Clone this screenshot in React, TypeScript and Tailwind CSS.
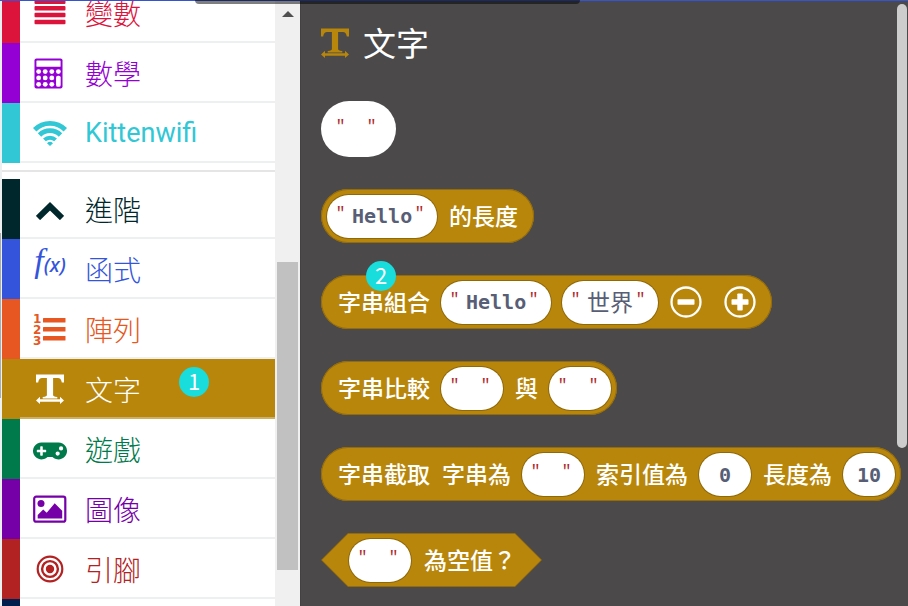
import type { ReactNode } from "react";
import { FaGamepad } from "react-icons/fa";

const sans = "font-['Roboto','Noto_Sans_CJK_TC',sans-serif]";

function MenuIcon() {
  return (
    <svg viewBox="0 0 32 32" className="size-8" fill="currentColor">
      <rect x="0.5" y="2.5" width="31" height="4.5" rx="1" />
      <rect x="0.5" y="8.9" width="31" height="4.5" rx="1" />
      <rect x="0.5" y="15.8" width="31" height="4.5" rx="1" />
      <rect x="0.5" y="22.7" width="31" height="4.5" rx="1" />
    </svg>
  );
}

function CalculatorIcon() {
  return (
    <svg viewBox="0 0 30 32" className="mr-1 h-[31px] w-[29px]">
      <rect x="0.5" y="0.5" width="29" height="31" rx="2" fill="currentColor" />
      <rect x="2.5" y="2.5" width="25" height="6.5" rx="0.6" fill="white" />
      {[14, 20.6, 27.2].map((y) =>
        [4.8, 11.6, 18.4].map((x) => <circle key={`${x}-${y}`} cx={x} cy={y} r="2.5" fill="white" />),
      )}
      <circle cx="25.2" cy="14" r="2.5" fill="white" />
      <rect x="22.8" y="18.2" width="4.8" height="11.6" rx="2" fill="white" />
    </svg>
  );
}

function WifiIcon() {
  return (
    <svg viewBox="0 0 34 25" className="h-[25px] w-[34px]" fill="none" stroke="currentColor" strokeWidth="4.8">
      <path d="M1.700 8.800a21.500 21.500 0 0 1 30.600 0" />
      <path d="M6.500 14a14.800 14.800 0 0 1 21 0" />
      <path d="M11.400 18.900a8.200 8.200 0 0 1 11.200 0" strokeWidth="4" />
      <path d="M14 22.200a4.400 4.400 0 0 1 6 0l-3 2.800z" fill="currentColor" stroke="none" />
    </svg>
  );
}

function ChevronIcon() {
  return (
    <svg viewBox="0 0 28 18" className="mt-1 h-[18px] w-7" fill="none" stroke="currentColor" strokeWidth="6">
      <path d="M2 16 14 4.300 26 16" />
    </svg>
  );
}

function FunctionIcon() {
  return (
    <span className="flex items-end pb-4 italic">
      <span className="font-['Liberation_Serif',serif] text-[34px] leading-8">f</span>
      <span className="font-['Noto_Sans',sans-serif] text-xl leading-6 font-medium">(x)</span>
    </span>
  );
}

function NumberedListIcon() {
  return (
    <svg viewBox="0 0 32 32" className="size-8 overflow-visible" fill="currentColor">
      <g className="font-['DejaVu_Sans',sans-serif] text-[12px] font-bold">
        <text x="-1" y="9.500">1</text>
        <text x="-1" y="20.500">2</text>
        <text x="-1" y="31.500">3</text>
      </g>
      <rect x="9" y="5" width="22.500" height="4.400" rx="0.500" />
      <rect x="9" y="14" width="22.500" height="4.400" rx="0.500" />
      <rect x="9" y="23" width="22.500" height="4.400" rx="0.500" />
    </svg>
  );
}

function TextIcon() {
  return (
    <svg viewBox="0 0 28 30" className="h-[30px] w-7" fill="currentColor">
      <path d="M0 0.500h28v8h-2.200c-.5-3.200-1.600-4.500-4.800-4.500h-3.900v17c0 1.200 1 1.600 4.200 2v1.500H6.700V23c3.200-.4 4.200-.8 4.200-2V4H7c-3.200 0-4.300 1.300-4.800 4.500H0z" />
      <path d="M0 26.500 4 22.800v2.500h20v-2.500l4 3.700-4 3.500v-2.300H4V30z" />
    </svg>
  );
}

function PictureIcon() {
  return (
    <svg viewBox="0 0 34 28" className="h-7 w-[34px]" fill="currentColor">
      <rect x="1.200" y="1.700" width="31.100" height="25" rx="2" fill="none" stroke="currentColor" strokeWidth="2.200" />
      <circle cx="8" cy="8.500" r="3.500" />
      <path d="M4.700 23.500v-3.500l5.500-5.500 3.500 3.300 8-9.500 7.500 7.500v7.700z" />
    </svg>
  );
}

function TargetIcon() {
  return (
    <svg viewBox="0 0 28 28" className="size-7" fill="none" stroke="currentColor">
      <circle cx="14" cy="14" r="12.300" strokeWidth="2.200" />
      <circle cx="14" cy="14" r="7.900" strokeWidth="2.400" />
      <circle cx="14" cy="14" r="4.200" fill="currentColor" stroke="none" />
    </svg>
  );
}

type Category = { label: string; icon: ReactNode; row: string; text: string };

const basic: Category[] = [
  { label: "變數", icon: <MenuIcon />, row: "border-[#dc143c]", text: "text-[#dc143c]" },
  { label: "數學", icon: <CalculatorIcon />, row: "border-[#9400d3]", text: "text-[#9400d3]" },
  { label: "Kittenwifi", icon: <WifiIcon />, row: "border-[#31c7d5]", text: "text-[#31c7d5]" },
];

const advanced: Category[] = [
  { label: "進階", icon: <ChevronIcon />, row: "border-[#00272b]", text: "text-[#00272b]" },
  { label: "函式", icon: <FunctionIcon />, row: "border-[#3455db]", text: "text-[#3455db]" },
  { label: "陣列", icon: <NumberedListIcon />, row: "border-[#e65722]", text: "text-[#e65722]" },
  { label: "文字", icon: <TextIcon />, row: "border-[#b8860b] bg-[#b8860b]", text: "text-white" },
  { label: "遊戲", icon: <FaGamepad className="mt-1 size-[34px]" />, row: "border-[#007a4b]", text: "text-[#007a4b]" },
  { label: "圖像", icon: <PictureIcon />, row: "border-[#7600a8]", text: "text-[#7600a8]" },
  { label: "引腳", icon: <TargetIcon />, row: "border-[#b22222]", text: "text-[#b22222]" },
  { label: "", icon: null, row: "border-[#001f4d]", text: "" },
];

function Badge({ children, place }: { children: ReactNode; place: string }) {
  return (
    <span
      className={`absolute flex size-[30px] items-center justify-center rounded-full bg-[#19dcdc] pb-1 font-['Noto_Sans_CJK_TC',sans-serif] text-[22px] leading-7 font-normal text-white ${place}`}
    >
      {children}
    </span>
  );
}

function CategoryRow({ item }: { item: Category }) {
  const latin = /[a-z]/.test(item.label);
  return (
    <li className={`relative h-[60px] border-l-[18px] ${item.row}`}>
      <button
        type="button"
        className={`flex h-[60px] w-full items-center border-b-2 text-left leading-10 ${item.text} ${
          item.label === "文字" ? "border-[#ecf0f1]/40" : "border-[#ecf0f1]"
        }`}
      >
        <span className="flex w-[60px] shrink-0 items-center justify-center pt-0.5">{item.icon}</span>
        <span className={latin ? "pt-0.5 pl-[5px] text-[27px] font-normal" : "pt-2 pl-[5px] text-[28px] font-light"}>
          {item.label}
        </span>
      </button>
      {item.label === "文字" && <Badge place="top-2 left-[159px]">1</Badge>}
    </li>
  );
}

function Quote() {
  return (
    <span className="mb-2 h-6 w-[13px] text-center font-['Liberation_Mono',monospace] text-base leading-7 text-[#b02a2a]">
      "
    </span>
  );
}

function TextField({ value = "", label, width = "w-3", bare = false }: { value?: string; label: string; width?: string; bare?: boolean }) {
  return (
    <span
      className={`flex items-center rounded-full bg-white ${
        bare ? "h-14 pr-[18px] pl-[13px]" : "-ml-px h-[43px] pr-[11px] pl-[7px] shadow-[0_0_0_1px_#8f6808]"
      }`}
    >
      <Quote />
      <input
        aria-label={label}
        defaultValue={value}
        className={`mr-px ml-[5px] bg-transparent font-['DejaVu_Sans_Mono','Noto_Sans_CJK_TC',monospace] text-[#575e75] outline-none ${
          /[A-Za-z]/.test(value) ? "text-xl font-bold" : "pt-0.5 text-[23px] font-normal"
        } ${width}`}
      />
      <Quote />
    </span>
  );
}

function NumberField({ value, label }: { value: string; label: string }) {
  return (
    <input
      aria-label={label}
      defaultValue={value}
      className="-ml-px h-[43px] w-[52px] rounded-full bg-white pt-0.5 text-center font-['DejaVu_Sans_Mono',monospace] text-xl font-bold text-[#575e75] shadow-[0_0_0_1px_#8f6808] outline-none"
    />
  );
}

function Label({ children }: { children: ReactNode }) {
  return <span className="relative pt-1 leading-8">{children}</span>;
}

function Block({ children, pad }: { children: ReactNode; pad: string }) {
  return (
    <div
      className={`relative flex h-[54px] w-max items-center gap-3 rounded-full bg-[#b8860b] text-[23px] font-medium whitespace-nowrap text-white shadow-[inset_0_0_0_1px_#936b09] ${pad}`}
    >
      {children}
    </div>
  );
}

function RoundButton({ plus = false }: { plus?: boolean }) {
  return (
    <button type="button" aria-label={plus ? "+" : "-"} className="size-8">
      <svg viewBox="0 0 32 32" className="size-8">
        <circle cx="16" cy="16" r="14.500" fill="none" stroke="white" strokeWidth="2.300" />
        <rect x="7.500" y="13.300" width="17" height="5.400" rx="0.800" fill="white" />
        {plus && <rect x="13.300" y="7.500" width="5.400" height="17" rx="0.800" fill="white" />}
      </svg>
    </button>
  );
}

export default function App() {
  return (
    <div className={`relative flex h-screen overflow-hidden bg-[#ecf0f1] pl-0.5 ${sans}`}>
      <nav className="flex w-[298px] shrink-0 bg-white">
        <div className="-mt-[17px] w-[273px] shrink-0">
          <ul>
            {basic.map((item) => (
              <CategoryRow key={item.label} item={item} />
            ))}
          </ul>
          <hr className="mt-[7px] mb-[7px] border-t-2 border-[#e5e5e5]" />
          <ul>
            {advanced.map((item) => (
              <CategoryRow key={item.label} item={item} />
            ))}
          </ul>
        </div>
        <div className="flex flex-1 flex-col items-center bg-[#f0f0f0] pt-[11px]">
          <svg viewBox="0 0 12 6" className="h-1.5 w-3" fill="#505050">
            <path d="M0 6 6 0l6 6z" />
          </svg>
          <div className="mt-[245px] h-[308px] w-[21px] bg-[#c1c1c1]" />
        </div>
      </nav>

      <main className="flex min-w-0 flex-1 flex-col gap-8 border-l border-[#434141] bg-[#4b4949] pl-5">
        <h1 className="mt-5 mb-[3px] flex h-[46px] items-center gap-3.5 text-[33px] leading-[46px] font-normal text-white">
          <span className="text-[#b8860b]">
            <TextIcon />
          </span>
          <span className="pt-[3px]">文字</span>
        </h1>
        <div className="flex">
          <TextField label="文字" bare />
        </div>
        <Block pad="pl-[7px] pr-4">
          <TextField value="Hello" label="的長度" width="w-[60px]" />
          <Label>的長度</Label>
        </Block>
        <Block pad="pl-[17px] pr-4">
          <Label>字串組合</Label>
          <TextField value="Hello" label="字串一" width="w-[60px]" />
          <TextField value="世界" label="字串二" width="w-[46px]" />
          <RoundButton />
          <span className="flex pl-2.5">
            <RoundButton plus />
          </span>
          <Badge place="-top-3.5 left-[45px]">2</Badge>
        </Block>
        <Block pad="pl-[17px] pr-1.5">
          <Label>字串比較</Label>
          <TextField label="字串比較" />
          <Label>與</Label>
          <TextField label="與" />
        </Block>
        <Block pad="pl-[17px] pr-1.5">
          <Label>字串截取</Label>
          <Label>字串為</Label>
          <TextField label="字串為" />
          <Label>索引值為</Label>
          <NumberField value="0" label="索引值為" />
          <Label>長度為</Label>
          <NumberField value="10" label="長度為" />
        </Block>
        <div className="relative flex h-[54px] w-max items-center gap-[13px] bg-[#936b09] pr-[26px] pl-[29px] text-[23px] font-medium whitespace-nowrap text-white [clip-path:polygon(27px_0,calc(100%-27px)_0,100%_50%,calc(100%-27px)_100%,27px_100%,0_50%)]">
          <span className="absolute inset-px bg-[#b8860b] [clip-path:polygon(26px_0,calc(100%-26px)_0,100%_50%,calc(100%-26px)_100%,26px_100%,0_50%)]" />
          <span className="relative">
            <TextField label="為空值" />
          </span>
          <Label>為空值？</Label>
        </div>
      </main>

      <div className="absolute top-1 right-px h-[444px] w-2.5 rounded-full bg-[#cdcdcd]" />
      <div className="absolute inset-x-0 top-0 h-px bg-[#3454d1]" />
      <div className="absolute top-0 left-[195px] h-1 w-[385px] rounded-b-[12px] bg-black/50" />
      <div className="absolute top-[233px] left-0 h-[165px] w-px bg-[#a9adae]" />
    </div>
  );
}
